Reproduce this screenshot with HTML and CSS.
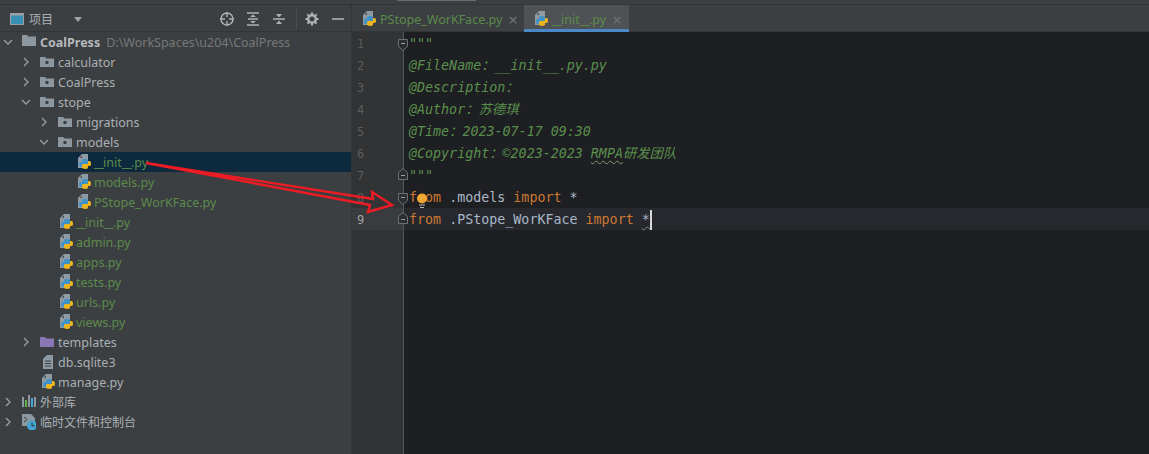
FILE: index.html
```html
<!DOCTYPE html>
<html lang="zh">
<head>
<meta charset="utf-8">
<title>CoalPress</title>
<link rel="stylesheet" href="styles.css">
</head>
<body>
<svg class="defs" width="0" height="0" aria-hidden="true">
  <symbol id="chev-r" viewBox="0 0 10 10"><path d="M3 1l4 4-4 4" fill="none" stroke="#9da0a2" stroke-width="1.300"/></symbol>
  <symbol id="chev-d" viewBox="0 0 10 10"><path d="M1 3l4 4 4-4" fill="none" stroke="#9da0a2" stroke-width="1.300"/></symbol>
  <symbol id="folder" viewBox="0 0 16 16"><path d="M2 3h5l1.500 1.500H16V13H2z" fill="#8c979f"/><circle cx="9" cy="8.500" r="1.700" fill="#3c3f41"/></symbol>
  <symbol id="folder-root" viewBox="0 0 16 16"><path d="M2 1h5l1.500 1.500H16V12H2z" fill="#8c979f"/></symbol>
  <symbol id="folder-tpl" viewBox="0 0 16 16"><path d="M2 3h5l1.500 1.500H16V13H2z" fill="#8a76b4"/></symbol>
  <symbol id="py" viewBox="0 0 18 18">
    <path d="M4 5l4-4h6v6H9v8H4z" fill="#8f9ba4"/>
    <path d="M5.800 4.800L8 2.600v2.200z" fill="#3c3f41"/>
    <path d="M10.500 6C8.500 6 8 6.800 8 7.700V9H6.500C5.500 9 5 10 5 11.300S5.500 14 6.500 14H8v-1.500c0-1 .8-1.500 1.800-1.500h2.700c1 0 1.500-.7 1.500-1.500V7.700C14 6.700 12.800 6 10.500 6z" fill="#3f93c9"/>
    <path d="M10.500 6C8.500 6 8 6.800 8 7.700V9H6.500C5.500 9 5 10 5 11.300S5.500 14 6.500 14H8v-1.500c0-1 .8-1.500 1.800-1.500h2.700c1 0 1.500-.7 1.500-1.500V7.700C14 6.700 12.800 6 10.500 6z" fill="#edb51d" transform="rotate(180 11 11)"/>
  </symbol>
  <symbol id="doc" viewBox="0 0 16 16"><path d="M5 5l4-4h6v14H5z" fill="#8f9ba4"/><path d="M7 7h6M7 9.500h6M7 12h6" stroke="#3c3f41" stroke-width="1"/></symbol>
  <symbol id="libs" viewBox="0 0 16 16"><rect x="2" y="3" width="2" height="10" fill="#8c979f"/><rect x="5" y="6" width="2" height="7" fill="#62b543"/><rect x="8" y="1" width="2" height="12" fill="#8c979f"/><rect x="11" y="4" width="2" height="9" fill="#40a7d8"/><rect x="14" y="3" width="2" height="10" fill="#8c979f"/></symbol>
  <symbol id="scratch" viewBox="0 0 16 16"><path d="M2 0h9l4 4v8H2z" fill="#8c979f"/><path d="M4 3l3 2.500L4 8" fill="none" stroke="#3c3f41" stroke-width="1"/><circle cx="12" cy="11.500" r="5" fill="#40a7d8"/><path d="M12 8.500v3.300h2.500" fill="none" stroke="#3c3f41" stroke-width="1.200"/></symbol>
  <symbol id="fold-down" viewBox="0 0 10 12"><path d="M.5.500h9v7L5 11.500.5 7.500z" fill="#2b2d30" stroke="#6e7173"/><path d="M3 4.500h4" stroke="#9a9da0"/></symbol>
  <symbol id="fold-up" viewBox="0 0 10 12"><path d="M.5 11.500h9v-7L5 .5.500 4.500z" fill="#2b2d30" stroke="#6e7173"/><path d="M3 7.500h4" stroke="#9a9da0"/></symbol>
</svg>

<div class="topline"><span class="topmark"></span></div>
<div class="app">
  <aside class="sidebar">
    <header class="panel-head">
      <svg class="pane-icon" width="14" height="12" viewBox="0 0 14 12"><rect x=".5" y=".5" width="13" height="11" fill="#3a8fb5" stroke="#9da0a2"/><rect x=".5" y=".5" width="13" height="2" fill="#9da0a2"/></svg>
      <span class="pane-title">项目</span>
      <svg class="pane-caret" width="8" height="5" viewBox="0 0 8 5"><path d="M0 0h8L4 5z" fill="#a0a3a5"/></svg>
      <div class="tools">
        <svg class="tool" width="16" height="16" viewBox="0 0 16 16"><circle cx="8" cy="8" r="6" fill="none" stroke="#aeb1b3" stroke-width="1.400"/><path d="M8 1v5M8 10v5M1 8h5M10 8h5" stroke="#aeb1b3" stroke-width="1.400"/></svg>
        <svg class="tool" width="16" height="16" viewBox="0 0 16 16"><path d="M2 2h12M2 14h12M3 8h10" stroke="#aeb1b3" stroke-width="1.500"/><path d="M8 3.500L11 6H5zM8 12.500L5 10h6z" fill="#aeb1b3"/></svg>
        <svg class="tool" width="16" height="16" viewBox="0 0 16 16"><path d="M2 8h12" stroke="#aeb1b3" stroke-width="1.500"/><path d="M8 6.500L5 3h6zM8 9.500l3 3.500H5z" fill="#aeb1b3"/></svg>
        <span class="tool-sep"></span>
        <svg class="tool" width="16" height="16" viewBox="0 0 16 16"><circle cx="8" cy="8" r="3.800" fill="none" stroke="#aeb1b3" stroke-width="2.600"/><path d="M8 1.500v3M8 11.500v3M1.500 8h3M11.500 8h3M3.400 3.400l2.100 2.100M10.500 10.500l2.100 2.100M12.600 3.400l-2.100 2.100M5.500 10.500l-2.100 2.100" stroke="#aeb1b3" stroke-width="2"/></svg>
        <svg class="tool" width="16" height="16" viewBox="0 0 16 16"><path d="M2 8h12" stroke="#aeb1b3" stroke-width="1.600"/></svg>
      </div>
    </header>
    <ul class="tree">
      <li class="row d0"><svg class="arrow"><use href="#chev-d"/></svg><svg class="icon"><use href="#folder-root"/></svg><b class="root">CoalPress</b><span class="path">D:\WorkSpaces\u204\CoalPress</span></li>
      <li class="row d1"><svg class="arrow"><use href="#chev-r"/></svg><svg class="icon"><use href="#folder"/></svg><span>calculator</span></li>
      <li class="row d1"><svg class="arrow"><use href="#chev-r"/></svg><svg class="icon"><use href="#folder"/></svg><span>CoalPress</span></li>
      <li class="row d1"><svg class="arrow"><use href="#chev-d"/></svg><svg class="icon"><use href="#folder"/></svg><span>stope</span></li>
      <li class="row d2"><svg class="arrow"><use href="#chev-r"/></svg><svg class="icon"><use href="#folder"/></svg><span>migrations</span></li>
      <li class="row d2"><svg class="arrow"><use href="#chev-d"/></svg><svg class="icon"><use href="#folder"/></svg><span>models</span></li>
      <li class="row d3 selected"><span class="arrow"></span><svg class="icon pyi"><use href="#py"/></svg><span class="new"><span class="us">__</span>init<span class="us">__</span>.py</span></li>
      <li class="row d3"><span class="arrow"></span><svg class="icon pyi"><use href="#py"/></svg><span class="new">models.py</span></li>
      <li class="row d3"><span class="arrow"></span><svg class="icon pyi"><use href="#py"/></svg><span class="new">PStope_WorKFace.py</span></li>
      <li class="row d2"><span class="arrow"></span><svg class="icon pyi"><use href="#py"/></svg><span class="new"><span class="us">__</span>init<span class="us">__</span>.py</span></li>
      <li class="row d2"><span class="arrow"></span><svg class="icon pyi"><use href="#py"/></svg><span class="new">admin.py</span></li>
      <li class="row d2"><span class="arrow"></span><svg class="icon pyi"><use href="#py"/></svg><span class="new">apps.py</span></li>
      <li class="row d2"><span class="arrow"></span><svg class="icon pyi"><use href="#py"/></svg><span class="new">tests.py</span></li>
      <li class="row d2"><span class="arrow"></span><svg class="icon pyi"><use href="#py"/></svg><span class="new">urls.py</span></li>
      <li class="row d2"><span class="arrow"></span><svg class="icon pyi"><use href="#py"/></svg><span class="new">views.py</span></li>
      <li class="row d1"><svg class="arrow"><use href="#chev-r"/></svg><svg class="icon"><use href="#folder-tpl"/></svg><span>templates</span></li>
      <li class="row d1"><span class="arrow"></span><svg class="icon"><use href="#doc"/></svg><span>db.sqlite3</span></li>
      <li class="row d1"><span class="arrow"></span><svg class="icon pyi"><use href="#py"/></svg><span>manage.py</span></li>
      <li class="row d0"><svg class="arrow"><use href="#chev-r"/></svg><svg class="icon"><use href="#libs"/></svg><span class="zh">外部库</span></li>
      <li class="row d0"><svg class="arrow"><use href="#chev-r"/></svg><svg class="icon"><use href="#scratch"/></svg><span class="zh">临时文件和控制台</span></li>
    </ul>
  </aside>

  <main class="main">
    <nav class="tabs">
      <div class="tab"><svg class="tab-icon"><use href="#py"/></svg><span class="new">PStope_WorKFace.py</span><span class="close">×</span></div>
      <div class="tab active"><svg class="tab-icon"><use href="#py"/></svg><span class="new"><span class="us">__</span>init<span class="us">__</span>.py</span><span class="close">×</span></div>
    </nav>
    <section class="editor">
      <div class="gutter">
        <div class="num">1</div><div class="num">2</div><div class="num">3</div><div class="num">4</div><div class="num">5</div><div class="num">6</div><div class="num">7</div><div class="num">8</div><div class="num cur">9</div>
      </div>
      <div class="code">
        <div class="line cm"><svg class="fold down"><use href="#fold-down"/></svg>"""</div>
        <div class="line cm">@FileName：__init__.py.py</div>
        <div class="line cm">@Description：</div>
        <div class="line cm">@Author：苏德琪</div>
        <div class="line cm">@Time：2023-07-17 09:30</div>
        <div class="line cm">@Copyright：©2023-2023 <span class="typo">RMPA</span>研发团队</div>
        <div class="line cm"><svg class="fold up"><use href="#fold-up"/></svg>"""</div>
        <div class="line"><svg class="fold down"><use href="#fold-down"/></svg><span class="kw">from</span> .models <span class="kw">import</span> *<svg class="bulb" width="12" height="16" viewBox="0 0 12 16"><circle cx="6" cy="5.500" r="5" fill="#f0a732"/><path d="M3 12h6M4 14.500h4" stroke="#bbb" stroke-width="1.200"/></svg></div>
        <div class="line cur"><svg class="fold up"><use href="#fold-up"/></svg><span class="kw">from</span> .PStope_WorKFace <span class="kw">import</span> <span class="typo2">*</span><span class="caret"></span></div>
      </div>
    </section>
  </main>
</div>
<svg class="annot" width="1149" height="454" viewBox="0 0 1149 454"><polygon points="146,163 373,199 372,192 392,205 368,212 370,205" fill="none" stroke="#ed1c24" stroke-width="2.400"/></svg>
</body>
</html>
```
FILE: styles.css
```css
* { box-sizing: border-box; }
html, body { margin: 0; padding: 0; }
body {
  width: 1149px;
  height: 454px;
  overflow: hidden;
  position: relative;
  background: #3c3f41;
  color: #a9b0b5;
  font-family: "Noto Sans", "Noto Sans CJK SC", sans-serif;
  font-size: 12.5px;
  display: flex;
  flex-direction: column;
}
.defs { position: absolute; }
.topline { height: 5px; flex: none; border-bottom: 1px solid #323436; padding-left: 397px; }
.topmark { display: block; width: 79px; height: 1px; background: #6a6d6f; }
.app { flex: 1; display: flex; min-height: 0; }

.sidebar { width: 352px; flex: none; border-right: 1px solid #323436; display: flex; flex-direction: column; }
.panel-head { height: 27px; flex: none; display: flex; align-items: center; padding-left: 10px; border-bottom: 1px solid #323436; padding-top: 1px; }
.pane-icon { flex: none; }
.pane-title { margin-left: 5px; font-size: 12px; }
.pane-caret { margin-left: 21px; margin-top: 2px; }
.tools { margin-left: auto; display: flex; align-items: center; gap: 10px; padding-right: 5px; }
.tool-sep { width: 1px; height: 20px; background: #4d5052; margin: 0 -3px 0 -1px; }
.tool { flex: none; }

.tree { list-style: none; margin: 0; padding: 0; }
.row { height: 20px; display: flex; align-items: center; white-space: nowrap; }
.d1 { padding-left: 18px; }
.d2 { padding-left: 36px; }
.d3 { padding-left: 54px; }
.arrow { width: 10px; height: 10px; flex: none; margin-left: 3px; margin-right: 7px; }
.icon { width: 16px; height: 16px; flex: none; margin-right: 4px; overflow: visible; }
.pyi { width: 18px; height: 18px; margin-right: 2px; }
.selected { background: #0d293e; }
.root { color: #b4b8bb; font-weight: 700; }
.path { margin-left: 6px; color: #787878; }
.new { color: #5b8b4c; }
.us { letter-spacing: -1px; }
.zh { font-size: 12px; }

.main { flex: 1; min-width: 0; display: flex; flex-direction: column; }
.tabs { height: 27px; flex: none; display: flex; border-bottom: 1px solid #323436; }
.tab { display: flex; align-items: center; padding: 1px 6px 0 7px; height: 27px; white-space: nowrap; width: 172px; }
.tab.active { background: #4e5254; border-bottom: 3px solid #4a88c7; width: 105px; padding: 4px 7px 0 7px; }
.tab-icon { width: 18px; height: 18px; flex: none; margin-right: 3px; overflow: visible; }
.close { margin-left: auto; color: #6e7173; font-size: 17px; line-height: 1; }

.editor { flex: 1; display: flex; min-height: 0; background: #1e1f22; }
.gutter { width: 52px; flex: none; background: #313335; border-right: 1px solid #55585a; font-family: "DejaVu Sans Mono", monospace; font-size: 12px; color: #5a5d5f; }
.num { height: 22px; line-height: 24px; padding-left: 5px; }
.num.cur { color: #a4a6a8; background: #393b3e; }
.code { flex: 1; min-width: 0; font-family: "DejaVu Sans Mono", "Noto Sans CJK SC", monospace; font-size: 13.33px; color: #a9b7c6; }
.line { height: 22px; line-height: 24px; padding-left: 5px; position: relative; white-space: pre; }
.line.cur { background: #26282e; }
.cm { color: #5a8f4d; font-style: italic; }
.kw { color: #cc7832; }
.typo { text-decoration: underline wavy #7f9a6a 1px; text-underline-offset: 2px; }
.typo2 { text-decoration: underline wavy #7f8a6a 1px; text-underline-offset: 2px; }
.caret { display: inline-block; width: 2px; height: 20px; background: #d5d8da; vertical-align: middle; }
.fold { position: absolute; left: -6px; width: 10px; height: 12px; }
.fold.down { top: 7px; }
.fold.up { top: 4px; }
.bulb { position: absolute; left: 12px; top: 7px; }

.annot { position: absolute; left: 0; top: 0; pointer-events: none; }
```
